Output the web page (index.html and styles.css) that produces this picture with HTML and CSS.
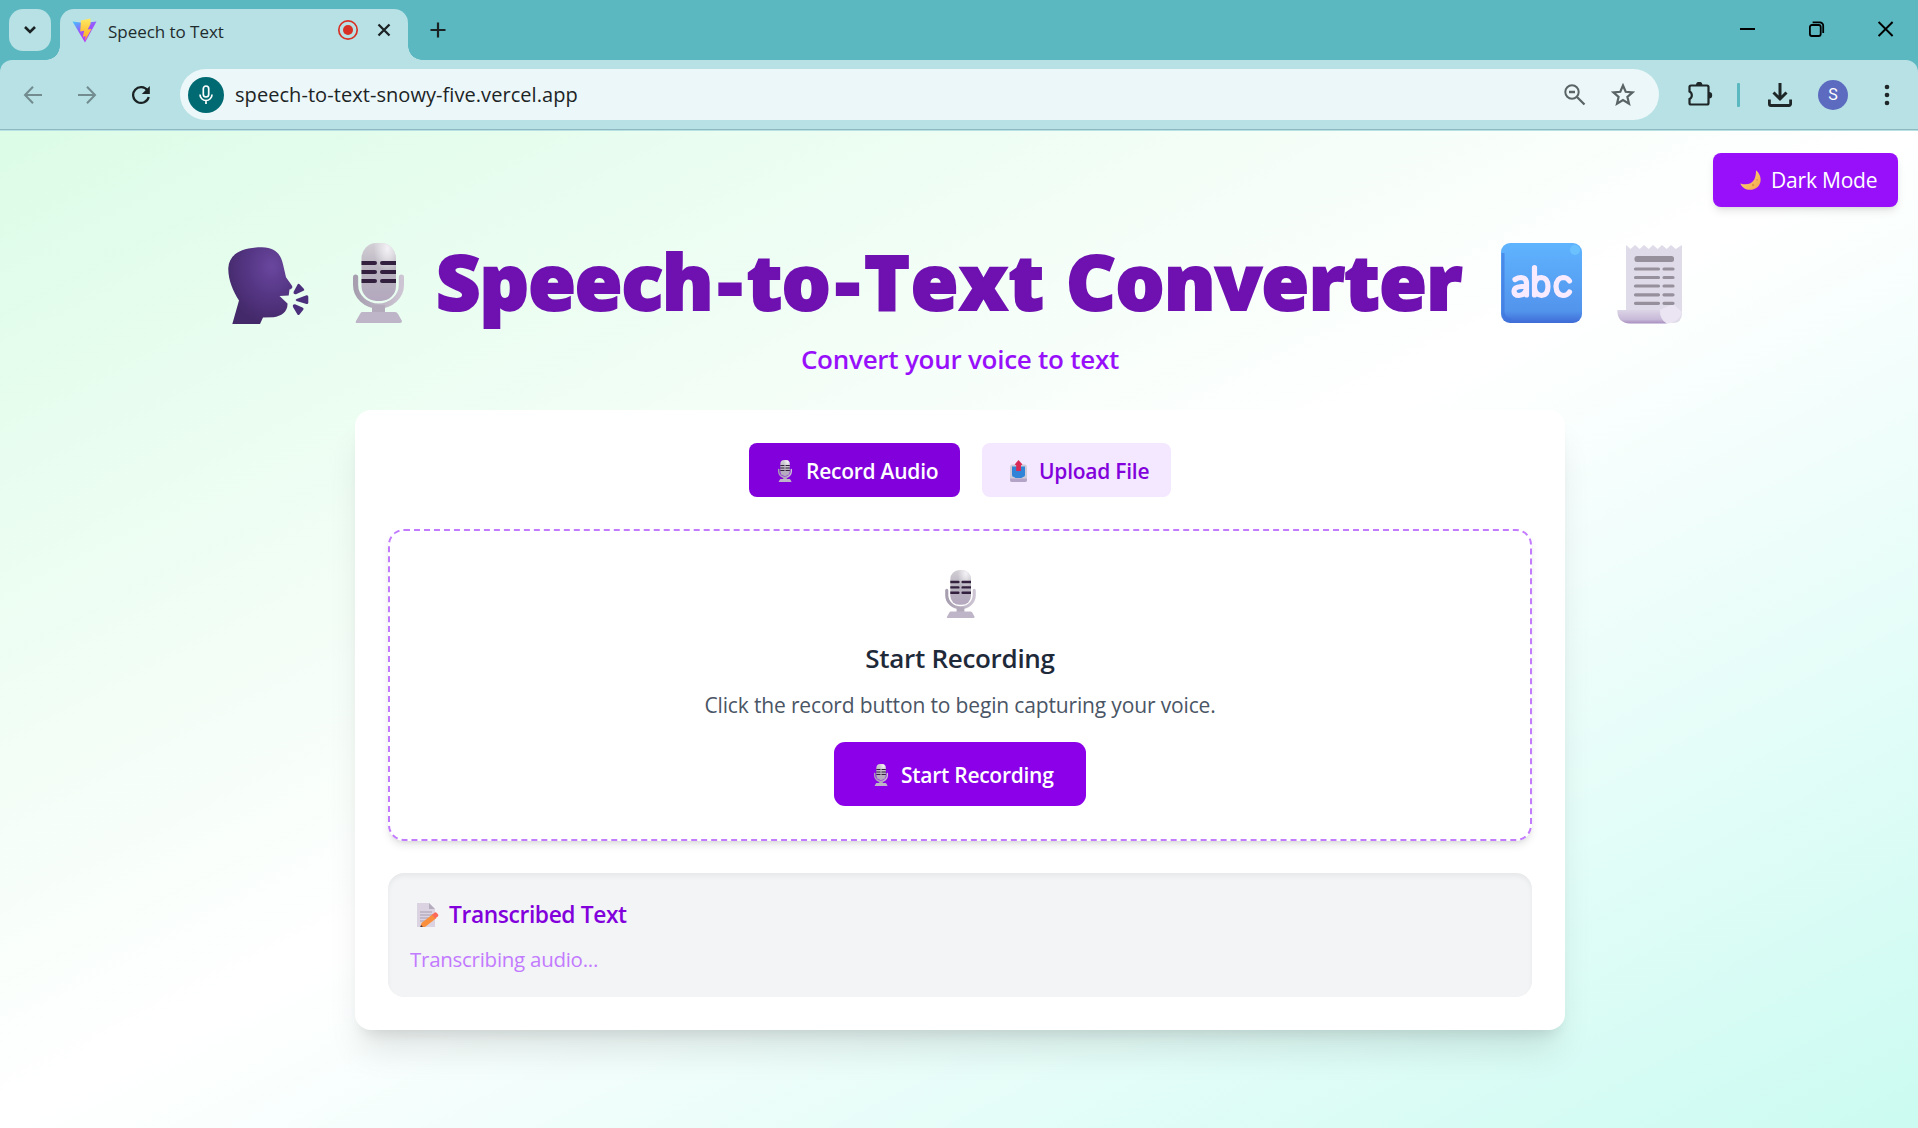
FILE: index.html
```html
<!DOCTYPE html>
<html lang="en">
<head>
<meta charset="utf-8">
<title>Speech to Text</title>
<link rel="stylesheet" href="styles.css">
</head>
<body>
<svg class="defs" aria-hidden="true">
  <defs>
    <linearGradient id="silver" x1="0" y1="0" x2="0" y2="1"><stop offset="0" stop-color="#d3cfd6"/><stop offset=".45" stop-color="#b9b4bf"/><stop offset="1" stop-color="#b4a8bf"/></linearGradient>
    <linearGradient id="stand" x1="0" y1="0" x2="1" y2="0"><stop offset="0" stop-color="#a79fb0"/><stop offset="1" stop-color="#cdc5d3"/></linearGradient>
    <radialGradient id="shine" cx=".75" cy=".1" r=".4"><stop offset="0" stop-color="#f4f2f6"/><stop offset="1" stop-color="#f4f2f6" stop-opacity="0"/></radialGradient>
    <radialGradient id="headFill" cx=".68" cy=".25" r=".75"><stop offset="0" stop-color="#6a479e"/><stop offset=".5" stop-color="#553685"/><stop offset="1" stop-color="#44296a"/></radialGradient>
    <linearGradient id="blueKey" x1="0" y1="0" x2="0" y2="1"><stop offset="0" stop-color="#5fb4ff"/><stop offset=".85" stop-color="#5294ec"/><stop offset="1" stop-color="#3f6bd6"/></linearGradient>
    <linearGradient id="roll" x1="0" y1="0" x2="0" y2="1"><stop offset="0" stop-color="#dcd5e6"/><stop offset=".7" stop-color="#c7b9d8"/><stop offset="1" stop-color="#a78dc0"/></linearGradient>
    <linearGradient id="moonFill" x1="0" y1="0" x2="1" y2="1"><stop offset="0" stop-color="#ffe07a"/><stop offset="1" stop-color="#f3a34e"/></linearGradient>
    <linearGradient id="viteBody" x1="0" y1="0" x2=".6" y2="1"><stop offset="0" stop-color="#41c8ff"/><stop offset=".5" stop-color="#9a55fb"/><stop offset="1" stop-color="#bd34fe"/></linearGradient>
    <linearGradient id="viteBolt" x1="0" y1="0" x2="0" y2="1"><stop offset="0" stop-color="#ffea62"/><stop offset="1" stop-color="#ffa51f"/></linearGradient>
    <symbol id="studio-mic" viewBox="0 0 51 80">
      <path d="M2.600 34v8a22.900 21 0 0 0 45.800 0v-8" fill="none" stroke="url(#stand)" stroke-width="5.200" stroke-linecap="round"/>
      <rect x="19" y="62" width="13" height="8" fill="#b3aabb"/>
      <path d="M9 69h33q2 0 3 2l4 7q0 2-2 2H4q-2 0-1-2l4-7q1-2 2-2z" fill="#bfb5c8"/>
      <rect x="8.500" y="0" width="34.500" height="58" rx="15" fill="url(#silver)"/>
      <rect x="8.500" y="0" width="34.500" height="58" rx="15" fill="url(#shine)"/>
      <path d="M8.500 18h13.500a2 2 0 0 1 0 4H8.500zM8.500 27h13.500a2 2 0 0 1 0 4H8.500zM8.500 36h13.500a2 2 0 0 1 0 4H8.500zM43 18H29a2 2 0 0 0 0 4h14zM43 27H29a2 2 0 0 0 0 4h14zM43 36H29a2 2 0 0 0 0 4h14z" fill="#33203f"/>
    </symbol>
  </defs>
</svg>

<header class="browser">
  <div class="tabstrip">
    <button class="tab-search"><svg width="14" height="10" viewBox="0 0 14 10"><path d="M2 2l5 5 5-5" fill="none" stroke="#1b2224" stroke-width="2.600"/></svg></button>
    <div class="tab">
      <svg class="vite" width="26" height="25" viewBox="0 0 26 25"><path d="M.5 3.500L12 5l12.500-1.500L13 24.500z" fill="url(#viteBody)"/><path d="M18.500.5L9 2.500l-.8 11 4-.8L10.800 19l3-1-1 5L19.500 11l-3.800.6L18.500 6z" fill="url(#viteBolt)"/></svg>
      <span class="tab-title">Speech to Text</span>
      <svg class="rec" width="22" height="22" viewBox="0 0 22 22"><circle cx="11" cy="11" r="9.200" fill="none" stroke="#d93025" stroke-width="1.700"/><circle cx="11" cy="11" r="5" fill="#d93025"/></svg>
      <svg class="tab-close" width="14" height="14" viewBox="0 0 14 14"><path d="M1.500 1.500l11 11m0-11l-11 11" stroke="#1b2224" stroke-width="2.300"/></svg>
    </div>
    <svg class="new-tab" width="16" height="16" viewBox="0 0 16 16"><path d="M8 .5v15M.5 8h15" stroke="#1b2224" stroke-width="2.200"/></svg>
    <div class="window-controls">
      <svg width="16" height="16" viewBox="0 0 16 16"><path d="M0 8h15" stroke="#000" stroke-width="2"/></svg>
      <svg width="16" height="16" viewBox="0 0 16 16"><rect x=".9" y="4" width="10.800" height="11" rx="2" fill="none" stroke="#000" stroke-width="1.800"/><path d="M3.600 1.300h7.300a3.300 3.300 0 0 1 3.300 3.300V12" fill="none" stroke="#000" stroke-width="1.800"/></svg>
      <svg width="16" height="16" viewBox="0 0 16 16"><path d="M.6 1l14 14M14.600 1l-14 14" stroke="#000" stroke-width="1.900"/></svg>
    </div>
  </div>
  <div class="toolbar">
    <svg class="back" width="20" height="20" viewBox="0 0 20 20"><path d="M19 10H2.500M10 1.800L2 10l8 8.200" fill="none" stroke="#728c90" stroke-width="2"/></svg>
    <svg class="fwd" width="20" height="20" viewBox="0 0 20 20"><path d="M1 10h16.500M10 1.800l8 8.200-8 8.200" fill="none" stroke="#728c90" stroke-width="2"/></svg>
    <svg class="reload" width="20" height="20" viewBox="0 0 20 20"><path d="M16.600 5.600A7.900 7.900 0 1 0 17.700 12" fill="none" stroke="#1b2224" stroke-width="2.300"/><path d="M18.800 1v8h-8z" fill="#1b2224"/></svg>
    <div class="omnibox">
      <span class="mic-chip"><svg width="14" height="20" viewBox="0 0 14 20"><rect x="4.300" y="1" width="5.400" height="11" rx="2.700" fill="none" stroke="#fff" stroke-width="1.700"/><path d="M1 9.500a6 6 0 0 0 12 0M7 15.500V19" fill="none" stroke="#fff" stroke-width="1.700"/></svg></span>
      <span class="url">speech-to-text-snowy-five.vercel.app</span>
      <svg class="zoom-out" width="22" height="22" viewBox="0 0 22 22"><circle cx="8" cy="8" r="6.700" fill="none" stroke="#5a6466" stroke-width="2"/><path d="M5 8h6M13 13l7.500 7.500" stroke="#5a6466" stroke-width="2.300"/></svg>
      <svg class="star" width="24" height="23" viewBox="0 0 24 23"><path d="M12 2.500l2.700 6.300 6.900.6-5.200 4.500 1.600 6.700-6-3.600-6 3.600 1.600-6.700-5.200-4.500 6.900-.6z" fill="none" stroke="#5a6466" stroke-width="2.200"/></svg>
    </div>
    <svg class="puzzle" width="26" height="26" viewBox="0 0 26 26"><path d="M4 3.500h16a1.500 1.500 0 0 1 1.500 1.500v16a1.500 1.500 0 0 1-1.500 1.500H4A1.500 1.500 0 0 1 2.500 21v-4a4.200 4.200 0 0 0 0-7.500V5A1.500 1.500 0 0 1 4 3.500z" fill="none" stroke="#1f2628" stroke-width="2.200"/><path d="M9 3a3.200 3.200 0 0 1 6.400 0zM22 10a3.200 3.200 0 0 1 0 6.400z" fill="#1f2628"/></svg>
    <span class="divider"></span>
    <svg class="download" width="24" height="24" viewBox="0 0 24 24"><path d="M12 0v16M5.500 9.500L12 16l6.500-6.500" fill="none" stroke="#1f2628" stroke-width="3"/><path d="M1.400 16.500V21a1.500 1.500 0 0 0 1.500 1.500h18.200a1.500 1.500 0 0 0 1.500-1.500v-4.500" fill="none" stroke="#1f2628" stroke-width="2.800"/></svg>
    <span class="avatar">S</span>
    <svg class="menu" width="6" height="22" viewBox="0 0 6 22"><circle cx="3" cy="3" r="2.300" fill="#1f2628"/><circle cx="3" cy="11" r="2.300" fill="#1f2628"/><circle cx="3" cy="19" r="2.300" fill="#1f2628"/></svg>
  </div>
</header>

<main class="page">
  <div class="topbar">
    <button class="mode-btn">
      <svg width="21" height="20" viewBox="0 0 21 20"><path d="M16 .3c6 5 6 13 1 17.200C11 21.800 3 20 .3 13.500c6 2 11.500.5 14-4C15.700 6.800 16 3.500 16 .3z" fill="url(#moonFill)"/><circle cx="13" cy="15" r="1.200" fill="#e39544"/><circle cx="17" cy="10" r="1" fill="#e8a04c"/></svg>
      <span>Dark Mode</span>
    </button>
  </div>

  <div class="hero">
    <svg class="e-head" width="81" height="78" viewBox="0 0 81 78"><path d="M4.300 77L11 53.500C5 44 0 33 .3 21 1 8 12 .3 34 .3c14 0 19 8 21 17l3 13 6 8.500c1 2-.5 3.200-2.500 3.700l-.8 6-9.200.5 8 7.500c.5 8-6 13-14 13.700L35 70.500 32 77z" fill="url(#headFill)"/><path d="M65.500 45l3.800-7q1-2 2.500-.5l4.200 4.500q1 1.500-1 2l-7 3.200q-2.800.4-2.500-2.200zM68.500 52l10-3.800q1.800-.3 1.800 1.500v6q0 1.500-1.800 1.300l-10-3q-1.800-1 0-2zM65 60q-.8-3 2-2.800l7.500 3.300q1.800.8.8 2.200l-4 5q-1 1-2-.5z" fill="#4c2f7c"/></svg>
    <svg class="e-mic" width="51" height="80"><use href="#studio-mic"/></svg>
    <h1><span class="first">Speech</span><span class="hyphen">-</span>to<span class="hyphen">-</span><span class="third">Text</span> Converter</h1>
    <svg class="e-abc" width="81" height="80" viewBox="0 0 81 80"><rect width="81" height="80" rx="9" fill="url(#blueKey)"/><path d="M2 10v58q0 8 8 9" fill="none" stroke="#3c74dd" stroke-width="3" opacity=".6"/><circle cx="74" cy="7" r="5" fill="#74cbff" opacity=".6"/><g fill="none" stroke="#f8ebff" stroke-width="5.200" stroke-linecap="round" stroke-linejoin="round"><path d="M14 36.500q3-2 6-2 5.500.3 5.500 6V52M25.500 43.500h-5q-7.500.5-7.500 4.500 0 4.500 5 4.500 5.500 0 7.500-6.500"/><path d="M33.500 24.500V52M33.500 42q1-7.500 7-7.500 6.500.5 6.500 9t-6.500 9q-6-.5-7-7.500"/><path d="M68.500 38q-2-3.500-6.500-3.500-6.500.5-7 9 .5 8.500 7 9 4.500 0 6.500-3.500"/></g></svg>
    <svg class="e-receipt" width="66" height="80" viewBox="0 0 66 80"><path d="M9 1l4.500 4L18 1l4.700 4L27 1l4.700 4L36 1l4.700 4L45 1l4.700 4L54 1l4.700 4L65 1v68q0 10-9 10H20L9 66z" fill="#e0dbe9"/><path d="M.3 66H43q0 10 7 13.500H13Q.3 79 .3 66z" fill="url(#roll)"/><path d="M43 66q0 10 7 13.500Q62 79 65 68L56 60z" fill="#ebe5f3"/><rect x="17.500" y="12" width="39.500" height="6" rx="2.500" fill="#96909c"/><path d="M18.500 25h23M47 25h9M18.500 33.500h23M47 33.500h9M18.500 42h23M47 42h9M18.500 50.800h23M47 50.800h9M18.500 59.300h23M47 59.300h9" stroke="#96909c" stroke-width="3.200" stroke-linecap="round"/></svg>
  </div>
  <p class="subtitle">Convert your voice to text</p>

  <section class="card">
    <div class="tabs">
      <button class="mode record"><svg width="14" height="22"><use href="#studio-mic"/></svg><span>Record Audio</span></button>
      <button class="mode upload"><svg width="17" height="22" viewBox="0 0 17 22"><path d="M0 7q0-2.500 2-2.500h13q2 0 2 2.500v13q0 2-2 2H2q-2 0-2-2z" fill="#cfcad8"/><path d="M0 18.500h17V20q0 2-2 2H2q-2 0-2-2z" fill="#b3a3c6"/><path d="M2 6.500h13V15q0 2-2 2l-1.500 1h-6L4 17q-2 0-2-2z" fill="#2f84d8"/><path d="M8.500 0L12.500 4.500 11 5.200V11H6.200V5.200L4.700 4.500z" fill="#d92b57"/></svg><span>Upload File</span></button>
    </div>
    <div class="recorder">
      <svg class="big-mic" width="31" height="48"><use href="#studio-mic"/></svg>
      <h2>Start Recording</h2>
      <p>Click the record button to begin capturing your voice.</p>
      <button class="start"><svg width="14" height="22"><use href="#studio-mic"/></svg><span>Start Recording</span></button>
    </div>
    <div class="transcript">
      <h3><svg width="22" height="24" viewBox="0 0 22 24"><path d="M0 0h12l6 6v18H0z" fill="#dbd3e2"/><path d="M12 0l6 6h-6z" fill="#b5adbd"/><path d="M3 9h12M3 12h12M3 15h9M3 18h6" stroke="#a59cae" stroke-width="1.100"/><path d="M4.500 20L16 11l3.500 4L8 24H3.500z" fill="#f98f3c"/><path d="M15 11.800l2.800-2.300q1-.5 1.800.3l1.500 1.800q.6 1-.2 1.700l-2.700 2.200z" fill="#fb6a5a"/><path d="M4 22l2 2H3.300z" fill="#4b3540"/></svg><span>Transcribed Text</span></h3>
      <p>Transcribing audio...</p>
    </div>
  </section>
</main>
</body>
</html>
```
FILE: styles.css
```css
* { box-sizing: border-box; margin: 0; padding: 0; }
body { width: 1918px; height: 1128px; overflow: hidden; font-family: "Open Sans", "Noto Sans", sans-serif; }
button { border: 0; font: inherit; color: inherit; white-space: nowrap; }
svg { display: block; flex: none; }
.defs { position: absolute; width: 0; height: 0; }

.browser { background: #5bb8c1; height: 131px; }
.tabstrip { height: 60px; display: flex; align-items: flex-start; padding: 9px 24px 0 9px; }
.tab-search { width: 42px; height: 42px; border-radius: 14px; background: #b7e1e4; display: flex; align-items: center; justify-content: center; margin-right: 9px; }
.tab { position: relative; width: 348px; height: 51px; border-radius: 14px 14px 0 0; background: #b7e1e4; display: flex; align-items: center; padding: 0 17px 9px 12px; }
.tab::before, .tab::after { content: ""; position: absolute; bottom: 0; width: 14px; height: 14px; }
.tab::before { left: -14px; background: radial-gradient(circle at 0 0, transparent 13.5px, #b7e1e4 14px); }
.tab::after { right: -14px; background: radial-gradient(circle at 100% 0, transparent 13.5px, #b7e1e4 14px); }
.tab-title { font-size: 17px; line-height: 24px; letter-spacing: -.04px; color: #1f2c2e; margin-left: 10px; flex: 1; padding-top: 3px; }
.tab-close { margin-left: 18px; }
.new-tab { margin: 13px 0 0 22px; }
.window-controls { margin-left: auto; display: flex; gap: 53px; padding-top: 12px; }

.toolbar { height: 71px; background: #b7e1e4; border-radius: 12px 12px 0 0; border-bottom: 1px solid #b7e1e4; box-shadow: inset 0 -1px 0 #8fb9c1; display: flex; align-items: center; padding: 0 28px 1px 23px; }
.fwd { margin-left: 34px; }
.reload { margin-left: 34px; }
.omnibox { width: 1479px; height: 51px; border-radius: 26px; background: #ebf7f8; margin-left: 29px; display: flex; align-items: center; padding: 0 24px 0 8px; }
.mic-chip { width: 36px; height: 36px; border-radius: 50%; background: #006a72; display: flex; align-items: center; justify-content: center; }
.url { flex: 1; margin-left: 11px; font-size: 20px; line-height: 28px; letter-spacing: .06px; color: #1c2426; }
.star { margin-left: 25px; }
.puzzle { margin-left: 28px; }
.divider { width: 3px; height: 24px; border-radius: 1px; background: #5bb8c1; margin-left: 24px; }
.download { margin-left: 28px; }
.avatar { width: 30px; height: 30px; border-radius: 50%; background: #5c6bc0; color: #fff; font: 16px/30px Roboto, sans-serif; text-align: center; margin-left: 26px; }
.menu { margin-left: auto; }

.page { height: 997px; background: linear-gradient(to bottom right, #dcfce7, #fff 50%, #cbfbf1); display: flex; flex-direction: column; align-items: center; padding: 22px 0 0 2px; }
.topbar { width: 100%; display: flex; justify-content: flex-end; padding-right: 20px; }
.mode-btn { width: 185px; height: 54px; border-radius: 8px; background: #980ffa; color: #fff; font-size: 21px; letter-spacing: -.2px; display: flex; align-items: center; padding-left: 27px; gap: 10px; box-shadow: 0 5px 8px -1px rgba(0,0,0,.1), 0 3px 5px -3px rgba(0,0,0,.1); }

.hero { display: flex; width: 1455px; height: 82px; margin: 36px 9px 0 0; align-items: flex-start; }
.e-head { margin-top: 4px; }
.e-mic { margin-left: 44px; }
.hero h1 { flex: 1 1 0; width: 0; margin-top: -3px; font-size: 77px; line-height: 82px; font-weight: 900; letter-spacing: -.5px; word-spacing: 1.5px; font-kerning: none; font-family: "Noto Sans", "Open Sans", sans-serif; color: #6e11b0; -webkit-text-stroke: 2px #6e11b0; padding-left: 32px; white-space: nowrap; }
.first { letter-spacing: -.9px; }
.hyphen { margin: 0 5px; }
.third { letter-spacing: .9px; }
.e-receipt { margin: 1px 0 0 35px; }
.subtitle { margin-top: 15px; font-size: 26px; line-height: 38px; font-weight: 600; letter-spacing: -.25px; color: #9810fa; }

.card { width: 1210px; height: 620px; margin-top: 32px; border-radius: 16px; background: #fff; padding: 33px; box-shadow: 0 27px 34px -7px rgba(0,0,0,.1), 0 11px 14px -8px rgba(0,0,0,.1); }
.tabs { display: flex; justify-content: center; gap: 22px; }
.mode { height: 54px; border-radius: 8px; display: flex; align-items: center; font-size: 21px; font-weight: 600; letter-spacing: -.25px; }
.mode span, .start span { padding-top: 2px; }
.mode svg, .start svg { margin-top: 1px; }
.record { width: 211px; background: #8200db; color: #fff; padding-left: 29px; gap: 14px; }
.upload { width: 189px; background: #f3e8ff; color: #8200db; padding-left: 28px; gap: 12px; }
.recorder { margin-top: 32px; height: 312px; border: 2px dashed #c27aff; border-radius: 16px; box-shadow: 0 5px 8px -1px rgba(0,0,0,.1), 0 3px 5px -3px rgba(0,0,0,.1); display: flex; flex-direction: column; align-items: center; padding-top: 39px; }
.recorder h2 { font-size: 26px; line-height: 38px; font-weight: 600; letter-spacing: -.3px; color: #1e2939; margin-top: 21px; }
.recorder p { font-size: 21px; line-height: 32px; letter-spacing: -.15px; color: #4a5565; margin-top: 12px; }
.start { width: 252px; height: 64px; border-radius: 11px; background: #8b00e8; color: #fff; font-size: 21px; font-weight: 600; letter-spacing: -.27px; display: flex; align-items: center; padding-left: 40px; gap: 13px; margin-top: 21px; }
.transcript { margin-top: 32px; height: 124px; border-radius: 16px; background: #f3f4f6; box-shadow: inset 0 3px 5px rgba(0,0,0,.05); padding: 23px 22px; }
.transcript h3 { display: flex; align-items: center; font-size: 22.8px; line-height: 38px; font-weight: 600; letter-spacing: -.4px; color: #8200db; padding-left: 7px; gap: 10px; }
.transcript p { font-size: 20.5px; line-height: 32px; letter-spacing: -.27px; color: #c27aff; margin-top: 9px; }
```
